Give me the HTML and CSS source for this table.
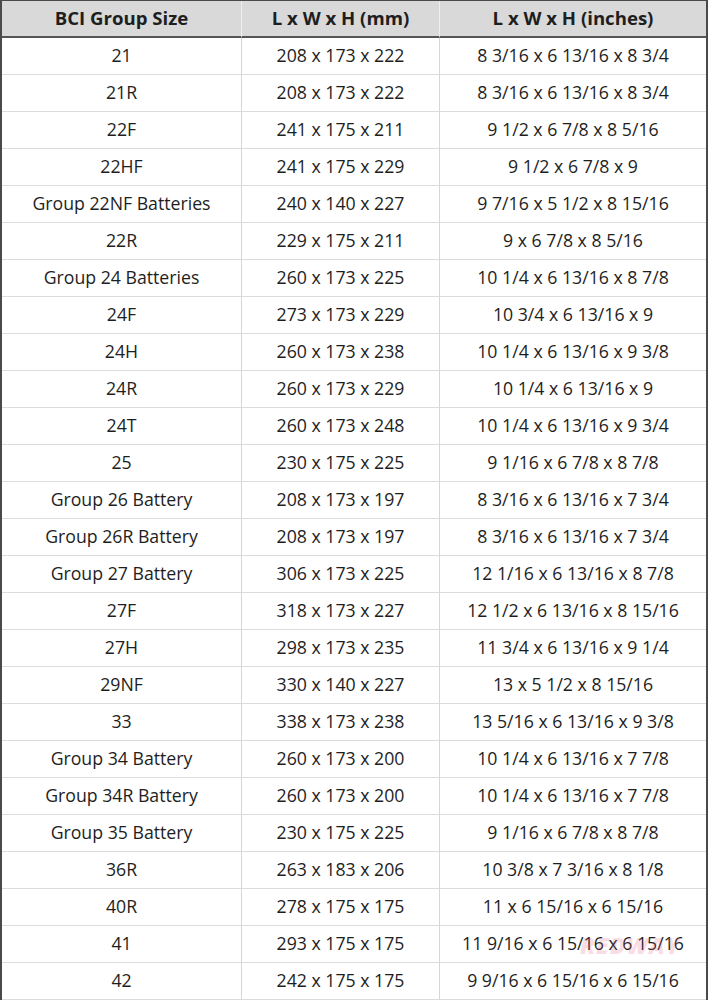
FILE: index.html
```html
<!DOCTYPE html>
<html>
<head>
<meta charset="utf-8">
<link rel="stylesheet" href="styles.css">
</head>
<body>
<div class="wrap">
<table class="sizes">
<colgroup><col class="c1"><col class="c2"><col class="c3"></colgroup>
<thead>
<tr><th>BCI Group Size</th><th>L x W x H (mm)</th><th>L x W x H (inches)</th></tr>
</thead>
<tbody>
<tr><td>21</td><td>208 x 173 x 222</td><td>8 3/16 x 6 13/16 x 8 3/4</td></tr>
<tr><td>21R</td><td>208 x 173 x 222</td><td>8 3/16 x 6 13/16 x 8 3/4</td></tr>
<tr><td>22F</td><td>241 x 175 x 211</td><td>9 1/2 x 6 7/8 x 8 5/16</td></tr>
<tr><td>22HF</td><td>241 x 175 x 229</td><td>9 1/2 x 6 7/8 x 9</td></tr>
<tr><td>Group 22NF Batteries</td><td>240 x 140 x 227</td><td>9 7/16 x 5 1/2 x 8 15/16</td></tr>
<tr><td>22R</td><td>229 x 175 x 211</td><td>9 x 6 7/8 x 8 5/16</td></tr>
<tr><td>Group 24 Batteries</td><td>260 x 173 x 225</td><td>10 1/4 x 6 13/16 x 8 7/8</td></tr>
<tr><td>24F</td><td>273 x 173 x 229</td><td>10 3/4 x 6 13/16 x 9</td></tr>
<tr><td>24H</td><td>260 x 173 x 238</td><td>10 1/4 x 6 13/16 x 9 3/8</td></tr>
<tr><td>24R</td><td>260 x 173 x 229</td><td>10 1/4 x 6 13/16 x 9</td></tr>
<tr><td>24T</td><td>260 x 173 x 248</td><td>10 1/4 x 6 13/16 x 9 3/4</td></tr>
<tr><td>25</td><td>230 x 175 x 225</td><td>9 1/16 x 6 7/8 x 8 7/8</td></tr>
<tr><td>Group 26 Battery</td><td>208 x 173 x 197</td><td>8 3/16 x 6 13/16 x 7 3/4</td></tr>
<tr><td>Group 26R Battery</td><td>208 x 173 x 197</td><td>8 3/16 x 6 13/16 x 7 3/4</td></tr>
<tr><td>Group 27 Battery</td><td>306 x 173 x 225</td><td>12 1/16 x 6 13/16 x 8 7/8</td></tr>
<tr><td>27F</td><td>318 x 173 x 227</td><td>12 1/2 x 6 13/16 x 8 15/16</td></tr>
<tr><td>27H</td><td>298 x 173 x 235</td><td>11 3/4 x 6 13/16 x 9 1/4</td></tr>
<tr><td>29NF</td><td>330 x 140 x 227</td><td>13 x 5 1/2 x 8 15/16</td></tr>
<tr><td>33</td><td>338 x 173 x 238</td><td>13 5/16 x 6 13/16 x 9 3/8</td></tr>
<tr><td>Group 34 Battery</td><td>260 x 173 x 200</td><td>10 1/4 x 6 13/16 x 7 7/8</td></tr>
<tr><td>Group 34R Battery</td><td>260 x 173 x 200</td><td>10 1/4 x 6 13/16 x 7 7/8</td></tr>
<tr><td>Group 35 Battery</td><td>230 x 175 x 225</td><td>9 1/16 x 6 7/8 x 8 7/8</td></tr>
<tr><td>36R</td><td>263 x 183 x 206</td><td>10 3/8 x 7 3/16 x 8 1/8</td></tr>
<tr><td>40R</td><td>278 x 175 x 175</td><td>11 x 6 15/16 x 6 15/16</td></tr>
<tr><td>41</td><td>293 x 175 x 175</td><td>11 9/16 x 6 15/16 x 6 15/16</td></tr>
<tr><td>42</td><td>242 x 175 x 175</td><td>9 9/16 x 6 15/16 x 6 15/16</td></tr>
</tbody>
</table>
<span class="watermark">REDWAY</span>
</div>
</body>
</html>
```
FILE: styles.css
```css
html, body {
  margin: 0;
  padding: 0;
  background: #ffffff;
}
.wrap {
  position: relative;
  width: 708px;
  height: 1000px;
  overflow: hidden;
}
.sizes {
  width: 708px;
  table-layout: fixed;
  border-collapse: separate;
  border-spacing: 0;
  border-left: 2px solid #4a4a4a;
  border-right: 2px solid #4a4a4a;
  border-top: 1px solid #4a4a4a;
  font-family: "Open Sans", "Noto Sans", sans-serif;
  font-size: 17.7px;
  color: #1e1e1e;
}
.c1 { width: 240px; }
.c2 { width: 198px; }
.c3 { width: 266px; }
.sizes th,
.sizes td {
  box-sizing: border-box;
  padding: 0 0 2px 0;
  text-align: center;
  vertical-align: middle;
  border-right: 1px solid #d6d6d6;
  border-bottom: 1px solid #dcdcdc;
  white-space: nowrap;
}
.sizes th:last-child,
.sizes td:last-child {
  border-right: none;
}
.sizes th {
  height: 37px;
  background: #d9d9d9;
  font-weight: 700;
  font-size: 18.6px;
  border-bottom: 2px solid #555555;
  border-right-color: #eeeeee;
}
.sizes td {
  height: 37px;
}
.watermark {
  position: absolute;
  left: 580px;
  top: 929px;
  font-family: "Open Sans", sans-serif;
  font-weight: 800;
  font-style: italic;
  font-size: 23px;
  letter-spacing: 1px;
  color: #e35a7a;
  opacity: 0.2;
}
```
